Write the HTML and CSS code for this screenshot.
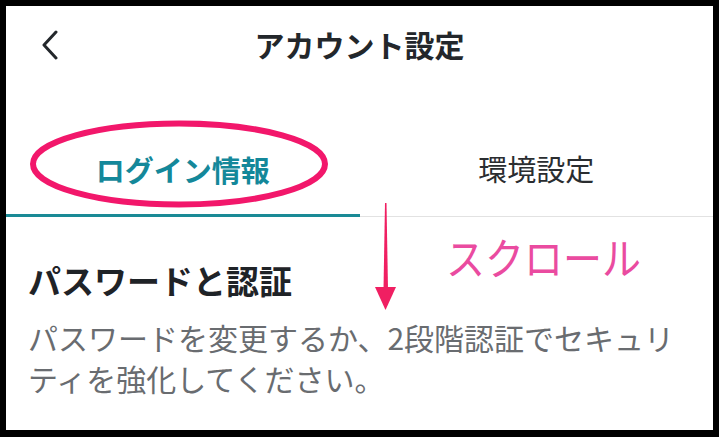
FILE: index.html
```html
<!DOCTYPE html>
<html lang="ja">
<head>
<meta charset="utf-8">
<title>アカウント設定</title>
<link rel="stylesheet" href="styles.css">
</head>
<body>
<div class="frame">
  <header class="header">
    <span class="back" aria-label="戻る">
      <svg width="18" height="30" viewBox="0 0 18 30"><path d="M15 2 L3 15 L15 28" fill="none" stroke="#23272b" stroke-width="3" stroke-linecap="round" stroke-linejoin="round"/></svg>
    </span>
    <h1 class="title">アカウント設定</h1>
  </header>
  <nav class="tabs">
    <div class="tab tab-active">ログイン情報</div>
    <div class="tab">環境設定</div>
  </nav>
  <section class="content">
    <h2 class="heading">パスワードと認証</h2>
    <p class="desc">パスワードを変更するか、2段階認証でセキュリティを強化してください。</p>
  </section>

  <svg class="ellipse" width="310" height="100" viewBox="0 0 310 100">
    <ellipse cx="155" cy="50" rx="146" ry="40.5" fill="none" stroke="#f2176b" stroke-width="6"/>
  </svg>
  <svg class="arrow" width="30" height="112" viewBox="0 0 30 112">
    <polygon points="14,0 15.5,0 17,86 12.5,86" fill="#f01f62"/>
    <polygon points="4,84 25,84 14.5,107" fill="#f01f62"/>
  </svg>
  <div class="scroll-label">スクロール</div>
</div>
</body>
</html>
```

FILE: styles.css
```css
* { box-sizing: border-box; }
html, body { margin: 0; padding: 0; }
body {
  width: 719px;
  height: 437px;
  background: #000;
  font-family: "Noto Sans CJK JP", "Noto Sans", sans-serif;
}
.frame {
  position: relative;
  width: 719px;
  height: 437px;
  background: #fff;
  border: 6px solid #000;
  border-bottom-width: 7px;
  overflow: hidden;
}
.header {
  position: relative;
  height: 76px;
  display: flex;
  align-items: center;
  justify-content: center;
}
.back {
  position: absolute;
  left: 35px;
  top: 24px;
  display: flex;
}
.title {
  margin: 0;
  font-size: 30px;
  font-weight: 700;
  color: #23272b;
  line-height: 1.2;
}
.tabs {
  display: grid;
  grid-template-columns: 1fr 1fr;
  height: 135px;
  border-bottom: 1px solid #e2e2e2;
}
.tab {
  display: flex;
  align-items: flex-end;
  justify-content: center;
  padding-bottom: 27px;
  font-size: 29px;
  line-height: 1.2;
  color: #2a2d30;
  border-bottom: 3px solid transparent;
}
.tab-active {
  color: #14889a;
  font-weight: 700;
  border-bottom-color: #1a8a96;
  margin-bottom: -1px;
}
.content {
  padding: 44px 30px 0 22px;
}
.heading {
  margin: 0;
  font-size: 33px;
  font-weight: 700;
  color: #1f2327;
  line-height: 1.2;
}
.desc {
  margin: 16px 0 0;
  font-size: 30px;
  line-height: 41px;
  color: #696c70;
}
.ellipse {
  position: absolute;
  left: 18px;
  top: 108px;
}
.arrow {
  position: absolute;
  left: 365px;
  top: 197px;
}
.scroll-label {
  position: absolute;
  left: 440px;
  top: 224px;
  font-size: 39px;
  line-height: 1.2;
  color: #ea4ba0;
  transform: scaleY(1.12);
  transform-origin: left top;
}
```
